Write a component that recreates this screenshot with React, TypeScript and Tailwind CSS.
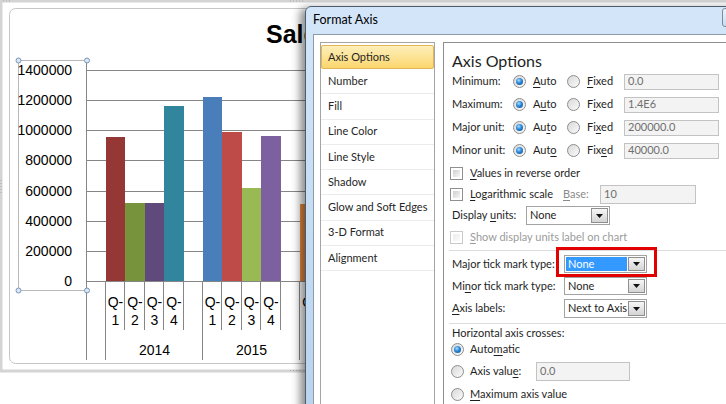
import type { ReactNode } from 'react';

const CHART_FONT = "'Liberation Sans', Arial, sans-serif";

// column edges of the category axis (x, px)
const cols = [87, 106, 125, 145, 164, 184, 203, 222, 242, 261, 281, 300, 320];
const gridY = [281, 251, 221, 191, 160, 130, 100, 70];
const yLabels = ['0', '200000', '400000', '600000', '800000', '1000000', '1200000', '1400000'];

const bars = [
  { col: 1, top: 137, fill: '#953735' },
  { col: 2, top: 203, fill: '#77933c' },
  { col: 3, top: 203, fill: '#604a7b' },
  { col: 4, top: 106, fill: '#31859c' },
  { col: 6, top: 97, fill: '#4a7ebb' },
  { col: 7, top: 132, fill: '#be4b48' },
  { col: 8, top: 188, fill: '#98b954' },
  { col: 9, top: 136, fill: '#7d60a0' },
  { col: 11, top: 204, fill: '#e98b3f' },
];

const qCols = [1, 2, 3, 4, 6, 7, 8, 9, 11];

function Chart() {
  return (
    <svg width="726" height="404" className="block">
      <defs>
        <clipPath id="title-clip">
          <rect x="0" y="0" width="305" height="60" />
        </clipPath>
      </defs>
      {/* selection frame of the chart object */}
      <rect x="1" y="1" width="760" height="370" fill="none" stroke="#d4d4d4" strokeWidth="3" />
      <rect x="9.5" y="8.5" width="760" height="355" rx="6" fill="#fff" stroke="#c6c6c6" />
      {[3, 6, 9].map((x) => (
        <rect key={x} x={x} y="0.5" width="1" height="1" fill="#a8a8a8" />
      ))}
      {[290, 293, 296, 299, 302].map((x) => (
        <rect key={x} x={x} y="0.5" width="1" height="1" fill="#a8a8a8" />
      ))}
      {[180, 183, 186, 189, 192].map((y) => (
        <rect key={y} x="0.5" y={y} width="1" height="1" fill="#a8a8a8" />
      ))}
      {[290, 293, 296, 299].map((x) => (
        <rect key={x} x={x} y="370" width="1" height="1" fill="#a8a8a8" />
      ))}

      <text x="266" y="43" clipPath="url(#title-clip)" fontFamily={CHART_FONT} fontWeight="700" fontSize="25" fill="#000">
        Sales
      </text>

      {/* gridlines */}
      {gridY.map((y) => (
        <line key={y} x1="87" x2="726" y1={y + 0.5} y2={y + 0.5} stroke="#868686" />
      ))}

      {/* value axis label box */}
      <path d="M87 60.5H18.5V290.5H87" fill="none" stroke="#b9b9b9" />
      {yLabels.map((t, i) => (
        <text key={t} x="72" y={gridY[i] + 5} textAnchor="end" fontFamily={CHART_FONT} fontSize="14" fill="#000">
          {t}
        </text>
      ))}

      {/* bars */}
      {bars.map((b) => (
        <rect key={b.col} x={cols[b.col]} y={b.top} width={cols[b.col + 1] - cols[b.col]} height={281 - b.top} fill={b.fill} />
      ))}

      {/* category axis */}
      <line x1="86.5" x2="86.5" y1="60" y2="360" stroke="#868686" />
      {cols.slice(1, 12).map((x, i) => (
        <line
          key={x}
          x1={x - 0.5}
          x2={x - 0.5}
          y1="281"
          y2={i === 0 || i === 5 || i === 10 ? 360 : 330}
          stroke="#868686"
        />
      ))}
      {qCols.map((c, i) => {
        const cx = (cols[c] + cols[c + 1]) / 2;
        return (
          <text key={c} x={cx} textAnchor="middle" fontFamily={CHART_FONT} fontSize="14" fill="#000">
            <tspan x={cx} y="307">Q-</tspan>
            <tspan x={cx} y="325">{(i % 4) + 1}</tspan>
          </text>
        );
      })}
      <text x="154.5" y="355" textAnchor="middle" fontFamily={CHART_FONT} fontSize="14" fill="#000">2014</text>
      <text x="251.5" y="355" textAnchor="middle" fontFamily={CHART_FONT} fontSize="14" fill="#000">2015</text>

      {/* handles */}
      {[
        [18.5, 60.5],
        [87, 60.5],
        [18.5, 290.5],
        [87, 290.5],
      ].map(([x, y]) => (
        <circle key={`${x}-${y}`} cx={x} cy={y} r="2.5" fill="#dde7f3" stroke="#7795bb" />
      ))}
    </svg>
  );
}

const U = ({ children }: { children: ReactNode }) => (
  <span className="underline decoration-1 underline-offset-[2px]">{children}</span>
);

function Radio({ on }: { on?: boolean }) {
  return (
    <span className="flex h-[13px] w-[13px] shrink-0 items-center justify-center rounded-full border border-[#8d8d8d] bg-linear-to-br from-[#d9d9d9] to-[#fafafa]">
      {on && (
        <span className="h-[7px] w-[7px] rounded-full bg-[radial-gradient(circle_at_40%_35%,#a8dcff_0%,#2a86d6_45%,#0b4a8c_100%)]" />
      )}
    </span>
  );
}

function Check({ disabled }: { disabled?: boolean }) {
  return (
    <span
      className={
        disabled
          ? 'block h-[13px] w-[13px] shrink-0 border border-[#cacaca] p-[2px]'
          : 'block h-[13px] w-[13px] shrink-0 border border-[#8e8f8f] p-[2px]'
      }
    >
      <span
        className={
          disabled
            ? 'block h-full w-full bg-linear-to-br from-[#ececec] to-[#fafafa]'
            : 'block h-full w-full bg-linear-to-br from-[#cfcfcf] to-[#f7f7f7]'
        }
      />
    </span>
  );
}

function Field({ value, className }: { value: string; className: string }) {
  return (
    <div className={`flex items-center border border-[#c3c3c3] bg-[#f3f3f3] pl-[3px] text-[#6f6f6f] ${className}`}>
      {value}
    </div>
  );
}

function Select({ value, className, active }: { value: string; className: string; active?: boolean }) {
  return (
    <div className={`flex border border-[#a3a3a3] bg-white p-[1px] ${className}`}>
      <div
        className={
          active
            ? 'flex min-w-0 flex-1 items-center overflow-hidden whitespace-nowrap bg-[#3399ff] pl-[2px] text-white'
            : 'flex min-w-0 flex-1 items-center overflow-hidden whitespace-nowrap pl-[2px]'
        }
      >
        {value}
      </div>
      <div className="ml-[1px] flex w-[17px] shrink-0 items-center justify-center border border-[#8f8f8f] bg-linear-to-b from-[#f6f6f6] to-[#d4d4d4]">
        <svg width="7" height="4" viewBox="0 0 7 4">
          <path d="M0 0h7L3.5 4z" fill="#111" />
        </svg>
      </div>
    </div>
  );
}

const navItems = [
  'Axis Options',
  'Number',
  'Fill',
  'Line Color',
  'Line Style',
  'Shadow',
  'Glow and Soft Edges',
  '3-D Format',
  'Alignment',
];

function Nav() {
  return (
    <div className="flex h-[380px] w-[115px] shrink-0 flex-col border border-[#a4a4a4] bg-white pt-[2px] text-[#262626]">
      {navItems.map((item, i) =>
        i === 0 ? (
          <div
            key={item}
            className="flex h-[24px] shrink-0 items-center rounded-[2px] border border-[#dfb65a] bg-linear-to-b from-[#fdefb9] to-[#fbd66c] pl-[6px]"
          >
            {item}
          </div>
        ) : (
          <div key={item} className="flex h-[25.25px] shrink-0 items-center border-b border-[#ececec] pl-[7px]">
            {item}
          </div>
        ),
      )}
    </div>
  );
}

const unitRows = [
  { label: 'Minimum:', auto: ['', 'A', 'uto'], fixed: ['', 'F', 'ixed'], value: '0.0' },
  { label: 'Maximum:', auto: ['A', 'u', 'to'], fixed: ['F', 'i', 'xed'], value: '1.4E6' },
  { label: 'Major unit:', auto: ['Au', 't', 'o'], fixed: ['Fi', 'x', 'ed'], value: '200000.0' },
  { label: 'Minor unit:', auto: ['Aut', 'o', ''], fixed: ['Fix', 'e', 'd'], value: '40000.0' },
];

function AxisPanel() {
  return (
    <div className="ml-[8px] flex h-[380px] flex-1 flex-col border-l border-t border-[#8e8e8e] pl-[8px] text-[#1e1e1e]">
      <div className="h-[27px] shrink-0 pt-[8px] text-[16px] leading-[19px]">Axis Options</div>

      {unitRows.map((r) => (
        <div key={r.label} className="flex h-[23px] shrink-0 items-center">
          <span className="w-[61px] whitespace-nowrap">{r.label}</span>
          <span className="flex w-[54px] items-center gap-[7px]">
            <Radio on />
            <span>
              {r.auto[0]}
              <U>{r.auto[1]}</U>
              {r.auto[2]}
            </span>
          </span>
          <span className="flex w-[57px] items-center gap-[7px]">
            <Radio />
            <span>
              {r.fixed[0]}
              <U>{r.fixed[1]}</U>
              {r.fixed[2]}
            </span>
          </span>
          <Field value={r.value} className="h-[16px] w-[95px]" />
        </div>
      ))}

      <div className="-ml-[2px] flex h-[22px] shrink-0 items-center gap-[7px]">
        <Check />
        <span>
          <U>V</U>alues in reverse order
        </span>
      </div>

      <div className="-ml-[2px] flex h-[20px] shrink-0 items-center">
        <Check />
        <span className="ml-[7px] w-[93px] whitespace-nowrap">
          <U>L</U>ogarithmic scale
        </span>
        <span className="w-[37px] text-[#8a8a8a]">
          <U>B</U>ase:
        </span>
        <Field value="10" className="h-[19px] w-[96px]" />
      </div>

      <div className="flex h-[23px] shrink-0 items-center">
        <span className="w-[74px] whitespace-nowrap">
          Display <U>u</U>nits:
        </span>
        <Select value="None" className="h-[19px] w-[84px]" />
      </div>

      <div className="-ml-[2px] flex h-[20px] shrink-0 items-center gap-[7px] text-[#9b9b9b]">
        <Check disabled />
        <span>
          <U>S</U>how display units label on chart
        </span>
      </div>

      <div className="-ml-[3px] mb-[2px] mt-[3px] h-px shrink-0 bg-[#dcdcdc]" />

      <div className="flex h-[22px] shrink-0 items-center">
        <span className="w-[112px] whitespace-nowrap">Major tick mark type:</span>
        <div className="relative">
          <Select value="None" className="h-[18px] w-[83px]" active />
          <div className="absolute -left-[8px] -top-[8px] h-[30px] w-[101px] border-[3px] border-[#e30000]" />
        </div>
      </div>

      <div className="flex h-[22px] shrink-0 items-center">
        <span className="w-[112px] whitespace-nowrap">
          Mi<U>n</U>or tick mark type:
        </span>
        <Select value="None" className="h-[18px] w-[83px]" />
      </div>

      <div className="flex h-[23px] shrink-0 items-center">
        <span className="w-[112px] whitespace-nowrap">
          <U>A</U>xis labels:
        </span>
        <Select value="Next to Axis" className="h-[19px] w-[83px]" />
      </div>

      <div className="-ml-[3px] mb-[2px] mt-[3px] h-px shrink-0 bg-[#dcdcdc]" />

      <div className="flex h-[14px] shrink-0 items-center">Horizontal axis crosses:</div>

      <div className="-ml-[1px] flex h-[19px] shrink-0 items-center gap-[6px]">
        <Radio on />
        <span>
          Auto<U>m</U>atic
        </span>
      </div>

      <div className="-ml-[1px] flex h-[24px] shrink-0 items-center">
        <Radio />
        <span className="ml-[6px] w-[66px] whitespace-nowrap">
          Axis valu<U>e</U>:
        </span>
        <Field value="0.0" className="h-[19px] w-[94px]" />
      </div>

      <div className="-ml-[1px] flex h-[23px] shrink-0 items-center gap-[6px]">
        <Radio />
        <span>
          <U>M</U>aximum axis value
        </span>
      </div>
    </div>
  );
}

function FormatAxisDialog() {
  return (
    <div className="absolute left-[305px] top-[6px] flex h-[420px] w-[440px] flex-col rounded-tl-[6px] border border-[#4e5d6e] bg-linear-to-b from-[#d3e6f9] to-[#b9d3ee] shadow-[-5px_2px_9px_rgba(0,0,0,0.45)]">
      <div className="relative flex h-[27px] shrink-0 items-center pl-[7px] text-[12.5px] text-black">
        Format Axis
        <div className="absolute left-[416px] top-px h-[19px] w-[45px] rounded-[3px] border border-[#7b8b9c] bg-linear-to-b from-[#eef4fb] to-[#c8daee]" />
      </div>
      <div className="ml-[7px] flex flex-1 border-l border-t border-[#8c9aaa] bg-white pl-[6px] pt-[7px] text-[11px]">
        <Nav />
        <AxisPanel />
      </div>
    </div>
  );
}

export default function App() {
  return (
    <div className="relative h-[404px] w-[726px] overflow-hidden bg-white font-['Lato',sans-serif]">
      <Chart />
      <FormatAxisDialog />
    </div>
  );
}
